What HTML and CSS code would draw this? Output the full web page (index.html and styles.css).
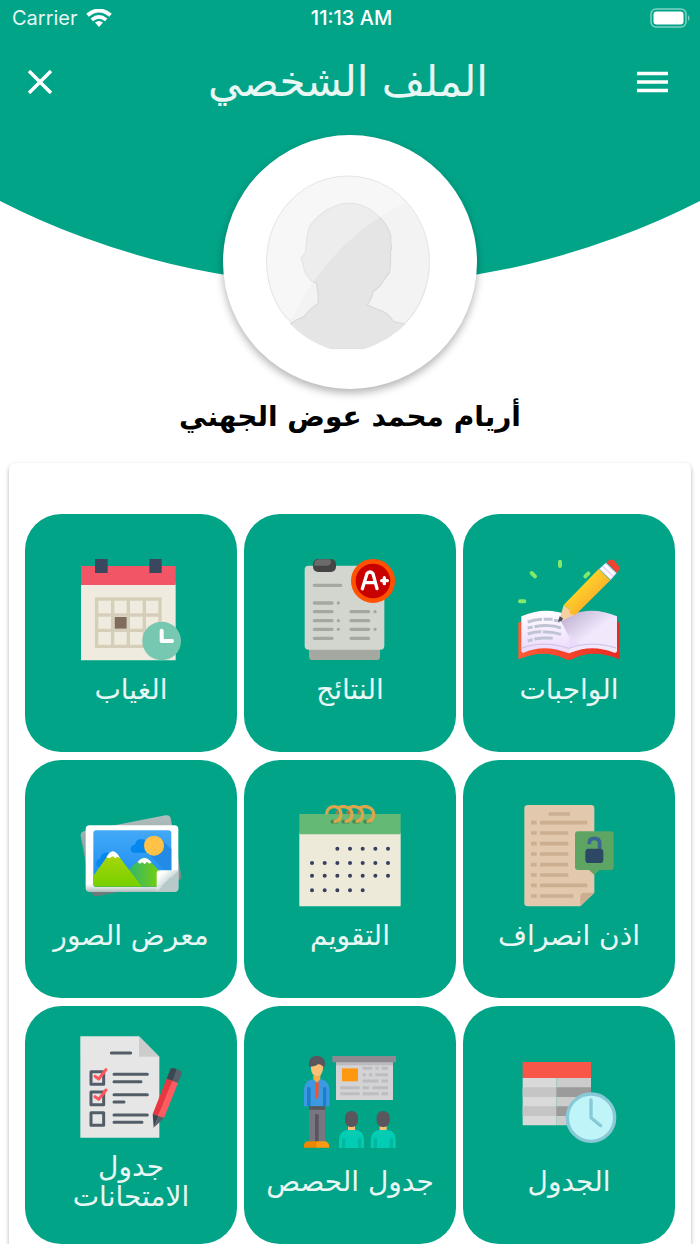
FILE: index.html
```html
<!DOCTYPE html>
<html lang="ar" dir="rtl">
<head>
<meta charset="utf-8">
<meta name="viewport" content="width=device-width, initial-scale=1">
<title>الملف الشخصي</title>
<link rel="stylesheet" href="styles.css">
</head>
<body>
<header class="hero">
  <svg class="hero-arc" viewBox="0 0 700 285" preserveAspectRatio="none" aria-hidden="true"><path fill="#02a488" d="M0 0H700V201A771 771 0 0 1 0 201Z"/></svg>
  <div class="status" dir="ltr">
    <div class="carrier"><span>Carrier</span>
      <svg width="26" height="18" viewBox="0 0 26 18" fill="none" stroke="#fff" aria-hidden="true"><path stroke-width="4" d="M1.500 6.300Q13-3.300 24.500 6.300"/><path stroke-width="3.600" d="M5.800 10.800Q13 4.800 20.200 10.800"/><path fill="#fff" stroke="none" d="M9 13.600Q13 10.600 17 13.600L13 18Z"/></svg>
    </div>
    <time>11:13 AM</time>
    <svg class="battery" width="41" height="20" viewBox="0 0 41 20" aria-hidden="true"><rect x="1" y="1" width="35" height="18" rx="5" fill="none" stroke="#7fd1c3" stroke-width="1.500"/><rect x="3.500" y="3.500" width="30" height="13" rx="3" fill="#fff"/><path d="M38 7Q41 10 38 13Z" fill="#7fd1c3"/></svg>
  </div>
  <nav class="topbar">
    <button class="icon-button" aria-label="القائمة"><svg width="31" height="24" viewBox="0 0 31 24"><path d="M0 3.500H31M0 12H31M0 20.500H31" stroke="#fff" stroke-width="3.400"/></svg></button>
    <h1>الملف الشخصي</h1>
    <button class="icon-button icon-button-end" aria-label="إغلاق"><svg width="24" height="24" viewBox="0 0 24 24"><path d="M1 1L23 23M23 1L1 23" stroke="#fff" stroke-width="3.400"/></svg></button>
  </nav>
  <div class="avatar">
    <svg viewBox="198 168 490 524" role="img" aria-label="الصورة الشخصية">
      <defs><clipPath id="face"><path d="M199 428C199 285 307 171 443 171S687 285 687 430C687 580 590 655 490 690H395C295 662 199 570 199 428Z"/></clipPath></defs>
      <g clip-path="url(#face)">
        <path fill="#f3f3f3" d="M190 160H700V700H190Z"/>
        <path id="bust" fill="#e5e5e5" stroke="#dadada" stroke-width="4" d="M190 690L276 610Q290 600 312 592Q325 572 354 552V527L349 492Q335 488 330 482Q310 460 307 428Q302 426 304 414Q311 409 316 398C318 370 320 325 338 309Q365 276 403 262Q420 253 437 253H462Q500 259 525 284Q560 310 571 350V376Q576 382 570 397Q572 430 567 460Q550 480 539 500L518 518Q516 535 500 557Q525 570 545 575Q570 590 578 606L610 614L700 690Z"/>
        <path fill="#fff" opacity=".32" d="M190 160H560L612 254C490 310 360 420 267 612L190 540Z"/>
      </g>
      <path fill="none" stroke="#d9d9d9" stroke-width="2" d="M273 608C225 565 200 500 199 428C199 285 307 171 443 171S687 285 687 430C686 500 660 565 611 614"/>
    </svg>
  </div>
  <h2>أريام محمد عوض الجهني</h2>
</header>
<main class="card">
  <a class="tile" href="#homework">
    <svg viewBox="173 147 306 306" aria-hidden="true">
      <defs>
        <linearGradient id="page" x1="0" y1="0" x2="0" y2="1"><stop stop-color="#fff"/><stop offset="1" stop-color="#ead8fb"/></linearGradient>
        <linearGradient id="shade" x1="0" y1="0" x2="1" y2="1"><stop stop-color="#b7a8cc"/><stop offset=".55" stop-color="#f1e8fc"/></linearGradient>
        <linearGradient id="pencil" x1="0" y1="0" x2="1" y2="1"><stop offset=".3" stop-color="#ffd829"/><stop offset=".75" stop-color="#fba72c"/></linearGradient>
        <linearGradient id="cover"><stop stop-color="#ff5b36"/><stop offset="1" stop-color="#e92b23"/></linearGradient>
      </defs>
      <path fill="url(#cover)" d="M174 340Q174 335 180 335H472Q478 335 478 341V448Q398 416 338 446Q326 453 313 446Q250 415 174 448Z"/>
      <path fill="url(#page)" d="M183 319Q254 287 326 316V430Q250 400 190 428Q183 430 183 423Z"/>
      <path fill="url(#shade)" d="M300 330L326 316Q398 287 470 319V423Q469 430 462 428Q394 400 326 430V380Z"/>
      <path fill="#eadbfb" d="M326 370L356 404Q340 408 326 416Z"/>
      <path fill="none" stroke="#d5c4e8" stroke-width="4" d="M185 414Q250 390 326 415Q394 390 468 414"/>
      <path fill="none" stroke="#bfc4d4" stroke-width="9" d="M202 336Q225 328 245 328M250 328H277M281 331L300 334M202 354L217 351M222 350Q270 341 302 354M202 372Q226 364 243 365M248 366Q275 364 302 373M202 393L217 389M222 387Q250 382 277 385"/>
      <path stroke="#84e86c" stroke-width="12" stroke-linecap="round" d="M299 155V168M214 189L224 199M179 274H192M375 199L384 190"/>
      <path fill="#f8cfa0" d="M297 330L310 285L345 313L304 333Z"/>
      <path fill="#4c5165" d="M293 335L298 319L308 325L304 333Z"/>
      <path fill="url(#pencil)" d="M310 285L415 177L450 211L345 315L330 313L326 298Z"/>
      <path fill="#e7dcf7" d="M416 177L437 158L469 189L451 210Z"/>
      <path fill="none" stroke="#fff" stroke-width="7" d="M423 174L453 203M432 164L462 194"/>
      <path fill="#f04432" d="M439 157Q449 144 461 151L478 171Q481 178 469 188Z"/>
    </svg>
    <span>الواجبات</span>
  </a>
  <a class="tile" href="#results">
    <svg viewBox="177 147 306 306" aria-hidden="true">
      <path fill="#a5a8a0" d="M207 410H420V440Q420 450 410 450H218Q207 450 207 440Z"/>
      <rect x="194" y="167" width="239" height="252" rx="12" fill="#d3d6cf"/>
      <rect x="219" y="147" width="69" height="39" rx="15" fill="#454545"/><path fill="#6b6b6b" d="M222 167Q222 148 237 148H271Q278 167 260 167Z"/>
      <path stroke="#a5a8a0" stroke-width="10" stroke-linecap="round" d="M223 226H302M223 279H276M223 305H276M223 332H276M223 358H276M223 385H276M333 305H386M333 332H386M333 358H386M333 385H386M295 279h.1M295 332h.1M295 358h.1M405 305h.1M405 358h.1"/>
      <circle cx="399" cy="213" r="59" fill="#c90000" stroke="#ff5100" stroke-width="14"/>
      <path fill="none" stroke="#fff" stroke-width="10" stroke-linecap="round" stroke-linejoin="round" d="M367 236L381 191Q390 181 399 191L411 236M375 218H405M425 212H442M433 203V221"/>
    </svg>
    <span>النتائج</span>
  </a>
  <a class="tile" href="#absence">
    <svg viewBox="181 147 306 306" aria-hidden="true">
      <path fill="#f0ebdf" d="M184 220H468V451H184Z"/><path fill="#f25566" d="M184 168H468V225H184Z"/>
      <path fill="#39485e" d="M226 147H264V189H226ZM389 147H426V189H389Z"/>
      <path fill="none" stroke="#d5cfb9" stroke-width="10" d="M231 267H421V409H231ZM279 267V409M326 267V409M374 267V409M231 315H421M231 361H421"/>
      <path fill="#806c5c" d="M285 321H321V356H285Z"/>
      <circle cx="426" cy="393" r="58" fill="#77c8b1"/><path fill="none" stroke="#fff" stroke-width="12" stroke-linecap="round" stroke-linejoin="round" d="M426 362V393H457"/>
    </svg>
    <span>الغياب</span>
  </a>
  <a class="tile" href="#permission">
    <svg viewBox="173 147 306 306" aria-hidden="true">
      <path fill="#e2c8ac" d="M202 147H392Q402 147 402 157V410L360 451H202Q192 451 192 441V157Q192 147 202 147Z"/>
      <path fill="#ccae91" d="M360 451V422Q360 410 372 410H402Z"/>
      <path stroke="#ccae91" stroke-width="11" d="M265 174H329M212 200H229M239 200H381M212 231H229M239 231H324M212 263H229M239 263H324M212 294H229M239 294H324M212 326H229M239 326H324M212 357H229M239 357H324M212 388H229M239 388H381M212 420H229M239 420H339"/>
      <path fill="#5ea463" d="M353 226H451Q460 226 460 235V333Q460 342 451 342H418L402 356L386 342H353Q344 342 344 333V235Q344 226 353 226Z"/>
      <path fill="none" stroke="#3b6592" stroke-width="11" d="M387 265V260Q387 247 402 247Q418 247 418 263V280"/><rect x="375" y="278" width="54" height="43" rx="10" fill="#2c4865"/>
    </svg>
    <span>اذن انصراف</span>
  </a>
  <a class="tile" href="#calendar">
    <svg viewBox="177 147 306 306" aria-hidden="true">
      <path fill="#eeeada" d="M178 230H482V451H178Z"/><path fill="#64b974" d="M178 174H482V235H178Z"/>
      <g fill="none" stroke-linecap="round"><path stroke="#438b51" stroke-width="11" d="M277 197H290M310 197H323M342 197H355M375 197H388"/><path stroke="#b7753e" stroke-width="9" d="M291 168V171M324 168V171M357 168V171"/>
      <path stroke="#dba64b" stroke-width="10" stroke-linecap="butt" d="M260 175C259 145 303 144 303 174Q303 195 281 197M293 157Q304 149 318 153Q336 159 336 175Q336 195 314 197M326 157Q337 149 350 153Q368 159 368 175Q368 195 347 197M358 157Q370 149 384 153Q401 159 401 175Q401 195 380 197"/></g>
      <path stroke="#39405d" stroke-width="12" stroke-linecap="round" d="M292 278h.1M330 278h.1M368 278h.1M406 278h.1M444 278h.1M216 321h.1M254 321h.1M292 321h.1M330 321h.1M368 321h.1M406 321h.1M444 321h.1M216 359h.1M254 359h.1M292 359h.1M330 359h.1M368 359h.1M406 359h.1M444 359h.1M216 403h.1M254 403h.1M292 403h.1M330 403h.1M368 403h.1"/>
    </svg>
    <span>التقويم</span>
  </a>
  <a class="tile" href="#gallery">
    <svg viewBox="181 147 306 306" aria-hidden="true">
      <defs>
        <linearGradient id="sky" x1="0" y1="0" x2="0" y2="1"><stop stop-color="#43a9f7"/><stop offset="1" stop-color="#168af0"/></linearGradient>
        <linearGradient id="hill" x1="0" y1="0" x2="0" y2="1"><stop stop-color="#b0d60a"/><stop offset="1" stop-color="#75d000"/></linearGradient>
        <linearGradient id="hill2"><stop stop-color="#31b473"/><stop offset="1" stop-color="#79d104"/></linearGradient>
        <linearGradient id="back" x1="0" y1="0" x2="0" y2="1"><stop stop-color="#b0bebe"/><stop offset="1" stop-color="#69797a"/></linearGradient>
        <linearGradient id="frame" x1="0" y1="0" x2="0" y2="1"><stop offset=".88" stop-color="#fff"/><stop offset="1" stop-color="#aebdbd"/></linearGradient>
        <linearGradient id="curl" x1="0" y1="0" x2="1" y2="1"><stop offset=".2" stop-color="#fff"/><stop offset=".55" stop-color="#c9d5d5"/></linearGradient>
      </defs>
      <path fill="url(#back)" d="M183 240Q182 229 192 226L438 178Q450 176 453 187L485 360Q486 370 476 373L232 421Q220 422 216 411Z"/>
      <rect x="198" y="208" width="278" height="200" rx="12" fill="url(#frame)"/>
      <rect x="221" y="223" width="234" height="170" rx="9" fill="url(#sky)"/>
      <path fill="#0587ee" d="M343 290Q330 287 333 276Q337 266 346 266Q349 250 364 249Q375 249 380 258V290ZM230 326Q229 311 241 309Q245 288 265 290L280 300L240 340Z"/>
      <path fill="#238be5" d="M387 293L425 250L455 280V343H435Z"/>
      <circle cx="403" cy="269" r="30" fill="#ffc246"/>
      <path fill="url(#hill2)" d="M334 333L365 307Q375 303 384 309L425 350V392H360L325 348Z"/>
      <path fill="url(#hill)" d="M221 360L270 291Q280 283 290 291L367 392H230Q221 392 221 384Z"/>
      <path fill="#fff" d="M260 304Q280 267 301 306L293 302L287 307L279 301L269 307ZM354 318Q374 293 396 319L389 323L382 317L375 325L368 319L360 323Z"/>
      <path fill="#b9c8c8" d="M411 407L476 343V397Q476 407 466 407Z"/>
      <path fill="url(#curl)" d="M411 407V352Q411 343 421 343H476Z"/>
    </svg>
    <span>معرض الصور</span>
  </a>
  <a class="tile" href="#schedule">
    <svg viewBox="173 152 306 306" aria-hidden="true">
      <path fill="#d9d9d9" d="M187 233H289V375H187Z"/><path fill="#ccc" d="M289 233H392V375H289Z"/><path fill="#c5c5c5" d="M187 261H289V290H187ZM187 318H289V347H187Z"/><path fill="#9b9b9b" d="M288 261H392V290H288ZM288 318H392V347H288Z"/><path fill="#f85648" d="M187 185H392V233H187Z"/>
      <circle cx="392" cy="352" r="71" fill="#bff5f9" stroke="#87c9d6" stroke-width="10"/><path fill="none" stroke="#87c9d6" stroke-width="10" stroke-linecap="round" d="M392 299V352L421 376"/>
    </svg>
    <span>الجدول</span>
  </a>
  <a class="tile" href="#classes">
    <svg viewBox="177 152 306 306" aria-hidden="true">
      <path fill="#d3d3d6" d="M288 180H459V299H288Z"/><path fill="#bbbbbe" d="M288 184H459V195H288Z"/><path fill="#8c8991" d="M277 167H468V186H277Z"/><path fill="#ff9811" d="M306 204H354V243H306Z"/>
      <path stroke="#bdbdc1" stroke-width="9" d="M368 204H397M406 204H416M425 204H444M368 223H378M387 223H397M406 223H444M368 242H416M425 242H444M301 262H359M368 262H387M397 262H444M301 280H359M368 280H416M425 280H444"/>
      <path fill="#fbc074" d="M213 190H249V205Q246 228 231 229Q214 226 213 204Z"/><path fill="#59565d" d="M207 197V187Q209 167 231 166Q253 168 255 187V198H248Q246 194 235 191Q225 199 208 199Z"/>
      <path fill="#f8ae47" d="M220 224Q231 232 241 224V240L231 250L220 240Z"/>
      <path fill="#3d9ae2" d="M192 318V267Q194 239 220 237L231 247L241 237Q266 240 268 266V318Z"/><path fill="#1d7fcb" d="M201 261H212V318H201ZM249 261H259V318H249Z"/><path fill="#ff5023" d="M226 246H236L235 290L231 297L226 291Z"/>
      <path fill="#787680" d="M207 319H255V424H207Z"/><path fill="#59565d" d="M207 318H255V328H207ZM225 342H236V424H225Z"/>
      <path fill="#ee8700" d="M192 442V434Q193 423 206 423H231V442Z"/><path fill="#ff9811" d="M230 442V423H256Q268 425 268 442Z"/>
      <g id="pupil"><path fill="#fbc074" d="M324 374H345V395H324Z"/><rect x="315" y="332" width="39" height="48" rx="19" fill="#59565d"/><path fill="#02cdb4" d="M297 443V421Q298 389 324 389H345Q372 390 372 421V443Z"/><path fill="#00b7a0" d="M306 414H316V443H306ZM354 414H364V443H354Z"/></g>
      <use href="#pupil" x="95"/>
    </svg>
    <span>جدول الحصص</span>
  </a>
  <a class="tile" href="#exams">
    <svg viewBox="181 105 306 306" aria-hidden="true">
      <path fill="#e6e6e6" d="M182 106H358L419 167V410H182Z"/><path fill="#ccc" d="M358 106L419 167H358Z"/>
      <path fill="none" stroke="#535d68" stroke-width="9" stroke-linecap="round" d="M275 156H333M283 220H383M283 242H364M283 281H383M283 303H313M283 342H383M283 364H367"/>
      <path fill="none" stroke="#535d68" stroke-width="9" stroke-linejoin="round" d="M214 212H252V250H214ZM214 273H252V311H214ZM214 335H252V373H214Z"/>
      <path fill="none" stroke="#ff565c" stroke-width="9" stroke-linecap="round" stroke-linejoin="round" d="M226 226L237 234L259 206M226 287L237 295L259 267"/>
      <path fill="#3d4751" d="M441 233L451 206Q455 199 464 202L471 205L459 242Z"/><path fill="#56616c" d="M458 242L472 204L481 208Q488 212 486 219L475 245Z"/>
      <path fill="#e93742" d="M441 233L459 239L415 346L399 339Z"/><path fill="#ff5b61" d="M458 239L475 246L433 351L415 345Z"/><path fill="#3d4751" d="M399 339L417 345L402 380Z"/><path fill="#56616c" d="M416 345L433 351L402 380Z"/>
    </svg>
    <span>جدول الامتحانات</span>
  </a>
</main>
</body>
</html>
```
FILE: styles.css
```css
* { box-sizing: border-box; }
body {
  margin: 0;
  background: #fff;
  color: #000;
  font-family: "DejaVu Sans", sans-serif;
}
.hero { position: relative; }
.hero-arc {
  position: absolute;
  top: 0;
  left: 0;
  z-index: -1;
  width: 100%;
  height: 285px;
}
.status {
  display: grid;
  grid-template-columns: 1fr auto 1fr;
  align-items: center;
  height: 36px;
  padding: 0 9px 0 12px;
  color: #fff;
  font: 20px/24px Inter, sans-serif;
}
.status time { font-weight: 500; font-size: 20px; }
.carrier { display: flex; align-items: center; gap: 8px; }
.carrier span { opacity: 0.9; }
.battery { justify-self: end; }
.topbar {
  display: grid;
  grid-template-columns: 1fr auto 1fr;
  align-items: center;
  height: 92px;
  padding: 0 32px 0 28px;
}
.topbar h1 {
  margin: 0;
  color: #e9f7f4;
  font-size: 42px;
  font-weight: 400;
  line-height: 60px;
}
.icon-button {
  display: flex;
  align-items: center;
  justify-self: start;
  height: 40px;
  padding: 0;
  border: 0;
  background: none;
}
.icon-button-end { justify-self: end; }
.avatar {
  display: flex;
  align-items: center;
  justify-content: center;
  width: 254px;
  height: 254px;
  margin: 7px auto 0;
  padding-right: 4px;
  border-radius: 50%;
  background: #fff;
  box-shadow: 0 4px 8px rgba(0, 0, 0, 0.3);
}
.avatar svg { width: 164px; height: 175px; }
.hero h2 {
  margin: 0;
  padding: 8px 16px 26px;
  font-size: 28px;
  font-weight: 700;
  line-height: 40px;
  text-align: center;
}
.card {
  display: grid;
  grid-template-columns: repeat(3, 1fr);
  grid-auto-rows: 238px;
  gap: 8px 7px;
  margin: 0 9px;
  padding: 51px 16px 0;
  border-radius: 6px 6px 0 0;
  box-shadow: 0 2px 4px rgba(0, 0, 0, 0.3);
}
.tile {
  display: flex;
  flex-direction: column;
  align-items: center;
  justify-content: center;
  gap: 14px;
  padding: 0 16px 2px;
  border-radius: 36px;
  background: #02a488;
  color: #e9f7f4;
  font-size: 28px;
  line-height: 30px;
  text-align: center;
  text-decoration: none;
}
.tile svg { flex: none; width: 102px; height: 102px; }
```
